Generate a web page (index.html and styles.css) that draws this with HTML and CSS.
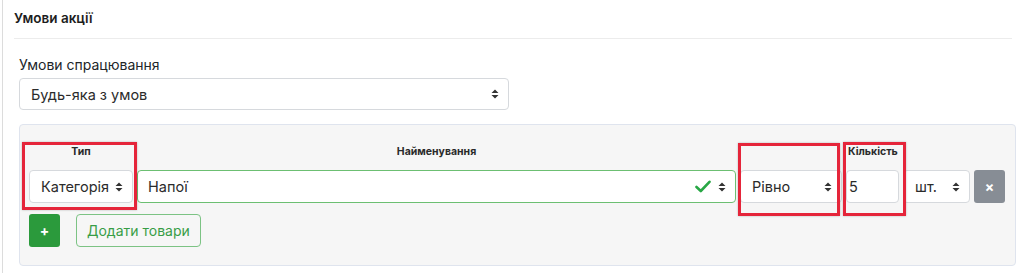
FILE: index.html
```html
<!DOCTYPE html>
<html lang="uk">
<head>
<meta charset="utf-8">
<title>Умови акції</title>
<link rel="stylesheet" href="styles.css">
</head>
<body>
<div class="page">
  <div class="card">
    <div class="card-header">Умови акції</div>
    <div class="card-body">
      <div class="label">Умови спрацювання</div>
      <div class="field select wide">
        <span>Будь-яка з умов</span>
        <svg class="caret" width="8" height="10" viewBox="0 0 8 10"><path d="M4 0.5L7.5 4H0.5Z M4 9.5L7.5 6H0.5Z" fill="#333"/></svg>
      </div>
      <div class="panel">
        <div class="grid">
          <div class="head center">Тип</div>
          <div class="head center">Найменування</div>
          <div class="head"></div>
          <div class="head left">Кількість</div>
          <div class="head"></div>
          <div class="head"></div>

          <div class="field select"><span>Категорія</span><svg class="caret" width="8" height="10" viewBox="0 0 8 10"><path d="M4 0.5L7.5 4H0.5Z M4 9.5L7.5 6H0.5Z" fill="#333"/></svg></div>
          <div class="field select valid"><span>Напої</span>
            <span class="icons">
              <svg class="check" width="16" height="13" viewBox="0 0 16 13"><path d="M1.5 7L5.8 11L14.5 1.8" fill="none" stroke="#28a745" stroke-width="2.6" stroke-linecap="round" stroke-linejoin="round"/></svg>
              <svg class="caret" width="8" height="10" viewBox="0 0 8 10"><path d="M4 0.5L7.5 4H0.5Z M4 9.5L7.5 6H0.5Z" fill="#333"/></svg>
            </span>
          </div>
          <div class="field select"><span>Рівно</span><svg class="caret" width="8" height="10" viewBox="0 0 8 10"><path d="M4 0.5L7.5 4H0.5Z M4 9.5L7.5 6H0.5Z" fill="#333"/></svg></div>
          <div class="field number"><span>5</span></div>
          <div class="field select"><span>шт.</span><svg class="caret" width="8" height="10" viewBox="0 0 8 10"><path d="M4 0.5L7.5 4H0.5Z M4 9.5L7.5 6H0.5Z" fill="#333"/></svg></div>
          <div class="btn-remove">×</div>
        </div>
        <div class="actions">
          <div class="btn-add">+</div>
          <div class="btn-outline">Додати товари</div>
        </div>
        <div class="mark mark-1"></div>
        <div class="mark mark-2"></div>
        <div class="mark mark-3"></div>
      </div>
    </div>
  </div>
</div>
</body>
</html>
```
FILE: styles.css
```css
* { box-sizing: border-box; }
html, body { margin: 0; padding: 0; background: #fff; }
body {
  font-family: Inter, "Noto Sans", "DejaVu Sans", sans-serif;
  color: #212529;
  width: 1024px;
  height: 273px;
  overflow: hidden;
}
.page { padding-left: 2px; height: 273px; }
.card {
  border-left: 1px solid #dcdcdc;
  height: 273px;
}
.card-header {
  margin: 0 12px 0 11px;
  padding-top: 8px;
  height: 39px;
  line-height: 20px;
  font-size: 13.5px;
  font-weight: 600;
  color: #1d1d1d;
  border-bottom: 1px solid #ececec;
}
.card-body { padding: 16px 8px 0 16px; }
.label {
  font-size: 14px;
  line-height: 20px;
  height: 20px;
  margin-bottom: 3px;
  color: #212529;
}
.field {
  display: flex;
  align-items: center;
  justify-content: space-between;
  background: #fff;
  border: 1px solid #d6d9dd;
  border-radius: 4px;
  font-size: 14.5px;
  color: #2b2b2b;
  height: 33px;
  padding: 0 9px 0 11px;
}
.field.wide { width: 490px; height: 32px; margin-bottom: 14px; }
.caret { display: block; flex: none; }
.field.valid { border-color: #6cbf72; padding-left: 10px; }
.icons { display: flex; align-items: center; gap: 7px; }
.field.number { padding-left: 2px; }
.panel {
  position: relative;
  background: #f6f6f6;
  border: 1px solid #dfe4ee;
  border-radius: 4px;
  height: 142px;
  padding: 20px 10px 0 9px;
}
.grid {
  display: grid;
  grid-template-columns: 104px 1fr 102px 53px 67px 31px;
  column-gap: 4px;
}
.head {
  font-size: 10.5px;
  font-weight: 700;
  line-height: 14px;
  height: 14px;
  margin-bottom: 11px;
  color: #2a2a2a;
}
.head.center { text-align: center; }
.head.left { padding-left: 2px; }
.btn-remove {
  background: #878d95;
  color: #fff;
  border-radius: 3px;
  height: 33px;
  display: flex;
  align-items: center;
  justify-content: center;
  font-size: 14px;
  font-weight: 700;
}
.actions {
  display: flex;
  gap: 16px;
  margin-top: 11px;
}
.btn-add {
  width: 31px;
  height: 33px;
  background: #2b9a3c;
  color: #fff;
  border-radius: 3px;
  display: flex;
  align-items: center;
  justify-content: center;
  font-size: 14px;
  font-weight: 700;
}
.btn-outline {
  height: 33px;
  padding: 0 10px;
  border: 1px solid #7cc384;
  border-radius: 4px;
  color: #389d46;
  display: flex;
  align-items: center;
  font-size: 14px;
}
.mark {
  position: absolute;
  border: 3px solid #e5253a;
  box-shadow: 0 0 2px rgba(0,0,0,0.25);
}
.mark-1 { left: 2px; top: 17px; width: 115px; height: 68px; }
.mark-2 { left: 718px; top: 18px; width: 102px; height: 73px; }
.mark-3 { left: 823px; top: 17px; width: 63px; height: 74px; }
```
